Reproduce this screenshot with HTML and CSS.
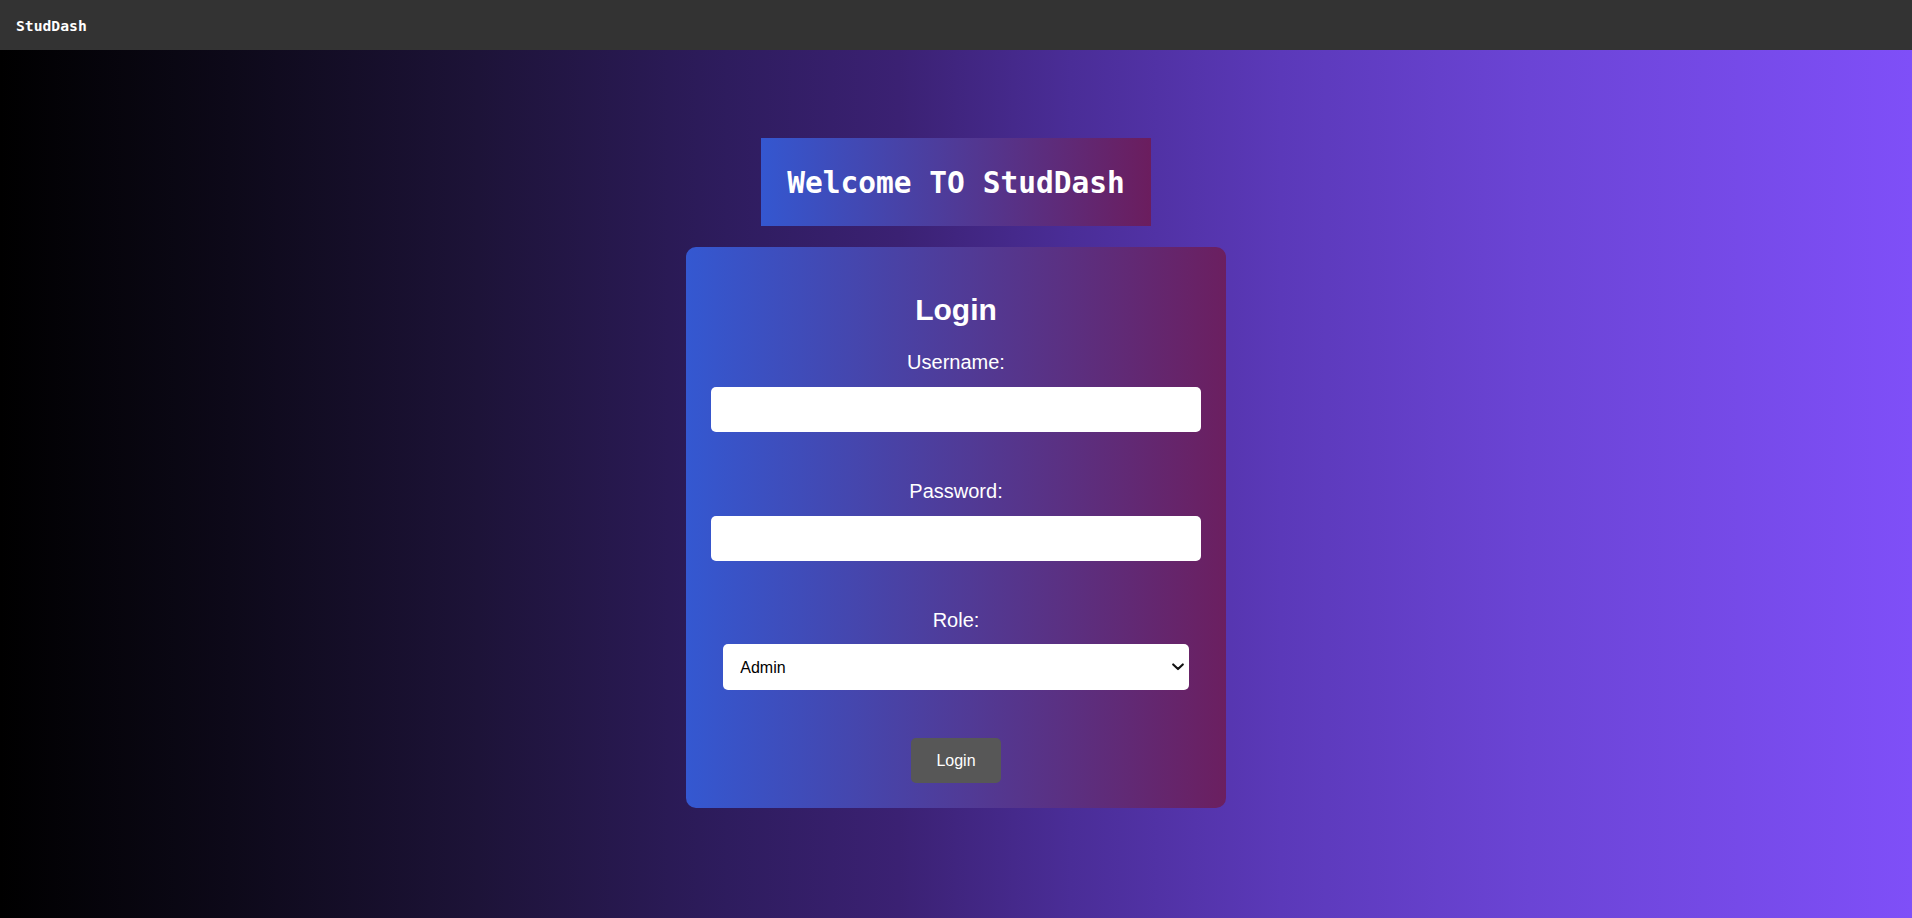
FILE: index.html
```html
<!DOCTYPE html>
<html lang="en">
<head>
<meta charset="utf-8">
<title>StudDash</title>
<link rel="stylesheet" href="styles.css">
</head>
<body>
  <nav class="topbar">
    <span class="brand">StudDash</span>
  </nav>
  <main class="main">
    <h1 class="welcome">Welcome TO StudDash</h1>
    <form class="card">
      <h2 class="card-title">Login</h2>
      <label class="label" for="username">Username:</label>
      <input class="field" id="username" type="text">
      <label class="label" for="password">Password:</label>
      <input class="field" id="password" type="password">
      <label class="label label-role" for="role">Role:</label>
      <div class="select-wrap">
        <select class="select" id="role">
          <option>Admin</option>
          <option>Student</option>
          <option>Teacher</option>
        </select>
        <svg class="chevron" width="12" height="8" viewBox="0 0 12 8" aria-hidden="true">
          <path d="M1.2 1.4 L6 6.1 L10.8 1.4" fill="none" stroke="#111" stroke-width="2.1" stroke-linecap="round" stroke-linejoin="round"/>
        </svg>
      </div>
      <button class="btn" type="button">Login</button>
    </form>
  </main>
</body>
</html>
```
FILE: styles.css
```css
* { box-sizing: border-box; }

html, body {
  margin: 0;
  padding: 0;
}

body {
  min-height: 100vh;
  font-family: "Liberation Sans", Arial, sans-serif;
  color: #fff;
  background: linear-gradient(to right, #000 0%, #0d0919 12%, #1d1338 25%, #2e1c5e 38%, #3b2173 47%, #4a2d97 56%, #5b39b9 67%, #6b44d5 80%, #7f4ff8 100%);
}

.topbar {
  height: 50px;
  background: #333;
  display: flex;
  align-items: center;
  padding: 0 16px;
}

.brand {
  font-family: "DejaVu Sans Mono", monospace;
  font-weight: bold;
  font-size: 14.7px;
  color: #fff;
}

.main {
  display: flex;
  flex-direction: column;
  align-items: center;
  padding-top: 88px;
  padding-bottom: 40px;
}

.welcome {
  margin: 0;
  height: 88px;
  padding: 1px 26px 0;
  line-height: 88px;
  font-family: "DejaVu Sans Mono", monospace;
  font-weight: bold;
  font-size: 29.5px;
  background: linear-gradient(to right, #3457d0, #6b1d5e);
  color: #fff;
  white-space: nowrap;
}

.card {
  margin-top: 21px;
  width: 540px;
  padding: 46px 25px 25px;
  border-radius: 10px;
  background: linear-gradient(to right, #3458d1, #6b1f60);
  display: flex;
  flex-direction: column;
  align-items: center;
}

.card-title {
  margin: 0 0 24px;
  font-size: 30px;
  line-height: 34px;
  font-weight: bold;
  text-align: center;
}

.label {
  display: block;
  font-size: 20px;
  line-height: 23px;
  margin-bottom: 13px;
  text-align: center;
}

.label-role {
  margin-bottom: 12px;
}

.field {
  width: 100%;
  height: 45px;
  border: none;
  border-radius: 5px;
  background: #fff;
  margin: 0 0 48px;
  padding: 0 12px;
  font-family: "Liberation Sans", Arial, sans-serif;
  font-size: 16px;
}

.select-wrap {
  position: relative;
  width: 95%;
  margin: 0 0 48px;
}

.select {
  display: block;
  width: 100%;
  height: 46px;
  border: none;
  border-radius: 5px;
  background-color: #fff;
  -webkit-appearance: none;
  appearance: none;
  padding: 0 30px 0 17px;
  font-family: "Liberation Sans", Arial, sans-serif;
  font-size: 16px;
  color: #000;
}

.chevron {
  position: absolute;
  right: 5px;
  top: 19px;
  pointer-events: none;
}

.btn {
  width: 90px;
  height: 45px;
  border: none;
  border-radius: 5px;
  background: #575757;
  color: #fff;
  font-family: "Liberation Sans", Arial, sans-serif;
  font-size: 16px;
  cursor: pointer;
}
```
